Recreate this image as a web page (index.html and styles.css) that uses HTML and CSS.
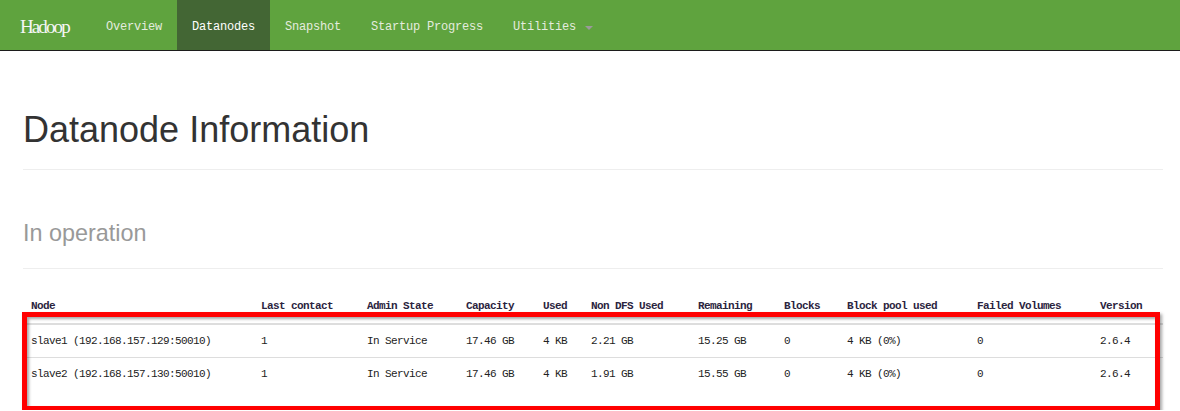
FILE: index.html
```html
<!DOCTYPE html>
<html>
<head>
<meta charset="utf-8">
<title>Datanode Information</title>
<link rel="stylesheet" href="styles.css">
</head>
<body>
<nav class="navbar">
  <div class="brand">Hadoop</div>
  <ul class="nav">
    <li><a>Overview</a></li>
    <li class="active"><a>Datanodes</a></li>
    <li><a>Snapshot</a></li>
    <li><a>Startup Progress</a></li>
    <li><a>Utilities<span class="caret"></span></a></li>
  </ul>
</nav>
<main class="container">
  <div class="page-header"><h1>Datanode Information</h1></div>
  <div class="page-header sub"><h1>In operation</h1></div>
  <div class="table-wrap">
    <table class="table">
      <colgroup>
        <col class="c-node"><col class="c-contact"><col class="c-state"><col class="c-cap"><col class="c-used"><col class="c-nondfs"><col class="c-rem"><col class="c-blocks"><col class="c-pool"><col class="c-failed"><col class="c-ver">
      </colgroup>
      <thead>
        <tr>
          <th>Node</th><th>Last contact</th><th>Admin State</th><th>Capacity</th><th>Used</th><th>Non DFS Used</th><th>Remaining</th><th>Blocks</th><th>Block pool used</th><th>Failed Volumes</th><th>Version</th>
        </tr>
      </thead>
      <tbody>
        <tr>
          <td>slave1 (192.168.157.129:50010)</td><td>1</td><td>In Service</td><td>17.46 GB</td><td>4 KB</td><td>2.21 GB</td><td>15.25 GB</td><td>0</td><td>4 KB (0%)</td><td>0</td><td>2.6.4</td>
        </tr>
        <tr>
          <td>slave2 (192.168.157.130:50010)</td><td>1</td><td>In Service</td><td>17.46 GB</td><td>4 KB</td><td>1.91 GB</td><td>15.55 GB</td><td>0</td><td>4 KB (0%)</td><td>0</td><td>2.6.4</td>
        </tr>
      </tbody>
    </table>
    <div class="highlight"></div>
  </div>
</main>
</body>
</html>
```
FILE: styles.css
```css
html, body {
  margin: 0;
  padding: 0;
  background: #fff;
}
body {
  font-family: "Liberation Sans", Arial, sans-serif;
  color: #333;
}
.navbar {
  display: flex;
  align-items: stretch;
  height: 50px;
  background: #5fa33e;
  border-bottom: 1px solid #1c1c1c;
}
.brand {
  box-sizing: border-box;
  width: 91px;
  padding: 3px 0 0 20px;
  line-height: 47px;
  font-family: "Liberation Serif", "Times New Roman", serif;
  font-size: 19px;
  letter-spacing: -1.9px;
  color: #f6f6f6;
}
.nav {
  display: flex;
  list-style: none;
  margin: 0;
  padding: 0;
}
.nav li a {
  display: flex;
  align-items: center;
  box-sizing: border-box;
  height: 50px;
  padding: 3px 15px 0;
  font-family: "Liberation Mono", "Courier New", monospace;
  font-size: 12px;
  letter-spacing: -0.2px;
  color: #e4ecdf;
}
.nav li.active a {
  background: #436634;
  color: #fff;
}
.caret {
  display: inline-block;
  width: 0;
  height: 0;
  margin-left: 9px;
  margin-top: 2px;
  border-top: 4px solid #9a9a9a;
  border-left: 4px solid transparent;
  border-right: 4px solid transparent;
}
.container {
  padding: 0 17px 0 23px;
}
.page-header {
  margin: 59px 0 0;
  padding-bottom: 9px;
  border-bottom: 1px solid #eee;
}
.page-header.sub {
  margin-top: 40px;
}
.page-header h1 {
  margin: 0 0 10px;
  font-size: 36px;
  font-weight: 400;
  line-height: 39.6px;
  color: #333;
}
.page-header.sub h1 {
  font-size: 23.4px;
  line-height: 29.6px;
  padding-top: 9px;
  height: 30.6px;
  color: #999;
}
.table-wrap {
  position: relative;
  margin-top: 20px;
  padding-bottom: 20px;
}
.table {
  width: 1140px;
  table-layout: fixed;
  border-collapse: collapse;
  font-family: "Liberation Mono", "Courier New", monospace;
  font-size: 11px;
  letter-spacing: -0.6px;
  color: #222;
}
.c-node { width: 230px; }
.c-contact { width: 106px; }
.c-state { width: 99px; }
.c-cap { width: 77px; }
.c-used { width: 48px; }
.c-nondfs { width: 107px; }
.c-rem { width: 86px; }
.c-blocks { width: 63px; }
.c-pool { width: 130px; }
.c-failed { width: 123px; }
.c-ver { width: 71px; }
.table th {
  text-align: left;
  font-weight: 700;
  padding: 8px;
  line-height: 18px;
  color: #2b2440;
  border-bottom: 2px solid #ddd;
  white-space: nowrap;
}
.table td {
  padding: 8px;
  line-height: 16px;
  border-top: 1px solid #ddd;
  white-space: nowrap;
}
.table tbody tr:first-child td {
  border-top: 0;
}
.highlight {
  position: absolute;
  left: -1px;
  top: 23px;
  width: 1138px;
  height: 99px;
  box-sizing: border-box;
  border: 5px solid #ff0000;
  box-shadow: inset 2px 2px 3px rgba(0, 0, 0, 0.35), 2px 2px 3px rgba(0, 0, 0, 0.35);
  pointer-events: none;
}
```
